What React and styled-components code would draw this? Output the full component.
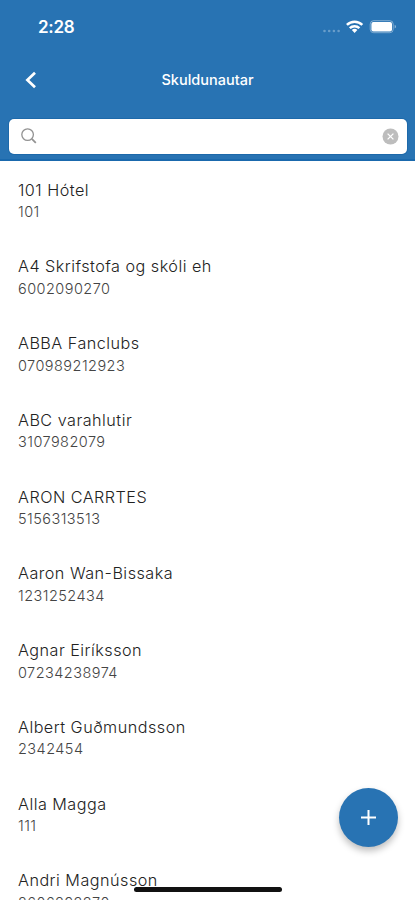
import React from "react";
import styled, { createGlobalStyle } from "styled-components";

const GlobalStyle = createGlobalStyle`
  * { box-sizing: border-box; }
  html, body { margin: 0; padding: 0; background: #fff; overflow: hidden; }
`;

const Screen = styled.main`
  position: relative;
  width: 415px;
  height: 900px;
  overflow: hidden;
  display: flex;
  flex-direction: column;
  background: #fff;
  font-family: Inter, "Liberation Sans", sans-serif;
`;

const Header = styled.header`
  flex: none;
  height: 161px;
  background: #2873b3;
  border-bottom: 2px solid #1a69ad;
  color: #fff;
`;

const StatusBar = styled.div`
  height: 54px;
  padding: 0 18px 0 38px;
  display: flex;
  align-items: center;
  justify-content: space-between;
`;

const Clock = styled.span`
  font-size: 17px;
  line-height: 20px;
  font-weight: 600;
  letter-spacing: -0.25px;
`;

const StatusIcons = styled.div`
  display: flex;
  align-items: center;
  svg { display: block; }
`;

const NavBar = styled.nav`
  height: 52px;
  display: grid;
  grid-template-columns: 60px 1fr 60px;
  align-items: center;
`;

const BackButton = styled.button`
  border: 0;
  padding: 0 0 0 24px;
  background: none;
  height: 20px;
  svg { display: block; }
`;

const Title = styled.h1`
  margin: 0;
  text-align: center;
  font-size: 14.5px;
  line-height: 20px;
  font-weight: 500;
`;

const SearchField = styled.div`
  margin: 12.5px 8px 0 9px;
  height: 35px;
  padding: 0 8px 0 12px;
  display: flex;
  align-items: center;
  justify-content: space-between;
  background: #fff;
  border-radius: 5px;
  box-shadow: 0 0 0 1px #1d69aa;
  svg { display: block; }
`;

const List = styled.ul`
  list-style: none;
  margin: 0;
  padding: 17.5px 18px 0;
`;

const Row = styled.li`
  height: 76.77px;
  white-space: nowrap;
`;

const Name = styled.div`
  font-size: 16.2px;
  line-height: 22px;
  font-weight: 300;
  letter-spacing: 0.48px;
  color: #222;
`;

const Number = styled.div`
  margin-top: 0.6px;
  font-size: 14.5px;
  line-height: 22px;
  font-weight: 300;
  letter-spacing: 0.45px;
  color: #444;
`;

const AddButton = styled.button`
  position: absolute;
  left: 339px;
  top: 788px;
  width: 59px;
  height: 59px;
  border: 0;
  padding: 0;
  border-radius: 50%;
  background: #2873b3;
  box-shadow: 0 4px 7px rgba(0, 0, 0, 0.26);
  display: grid;
  place-items: center;
`;

const HomeIndicator = styled.div`
  position: absolute;
  left: 134px;
  top: 887px;
  width: 148px;
  height: 5px;
  border-radius: 3px;
  background: #111;
`;

const customers = [
  ["101 Hótel", "101"],
  ["A4 Skrifstofa og skóli eh", "6002090270"],
  ["ABBA Fanclubs", "070989212923"],
  ["ABC varahlutir", "3107982079"],
  ["ARON CARRTES", "5156313513"],
  ["Aaron Wan-Bissaka", "1231252434"],
  ["Agnar Eiríksson", "07234238974"],
  ["Albert Guðmundsson", "2342454"],
  ["Alla Magga", "111"],
  ["Andri Magnússon", "2606893370"],
];

const StatusGlyphs = () => (
  <svg width="76" height="20" viewBox="321 17 76 20" fill="none">
    <g fill="#fff" opacity="0.3">
      <circle cx="324.5" cy="31" r="1.3" />
      <circle cx="329.2" cy="31" r="1.3" />
      <circle cx="333.9" cy="31" r="1.3" />
      <circle cx="338.6" cy="31" r="1.3" />
    </g>
    <g stroke="#fff" strokeWidth="2.5">
      <path d="M346.9 24.9a11 11 0 0 1 15.4 0" />
      <path d="M349.8 28.1a6.9 6.9 0 0 1 9.6 0" />
    </g>
    <path d="M351.8 30a4 4 0 0 1 5.6 0l-2.8 3z" fill="#fff" />
    <rect x="370.2" y="20.7" width="23" height="12" rx="3.4" stroke="#fff" strokeOpacity="0.4" />
    <rect x="371.4" y="21.9" width="20.6" height="9.6" rx="2" fill="#fff" />
    <path d="M394.7 24.8c1.7.6 1.7 3.2 0 3.8z" fill="#fff" fillOpacity="0.5" />
  </svg>
);

export default function App() {
  return (
    <>
      <GlobalStyle />
      <Screen>
        <Header>
          <StatusBar>
            <Clock>2:28</Clock>
            <StatusIcons><StatusGlyphs /></StatusIcons>
          </StatusBar>
          <NavBar>
            <BackButton aria-label="Back">
              <svg width="14" height="20" viewBox="0 0 14 20" fill="none" stroke="#fff" strokeWidth="2.7">
                <path d="M11 2.8 3.4 10l7.6 7.2" />
              </svg>
            </BackButton>
            <Title>Skuldunautar</Title>
          </NavBar>
          <SearchField>
            <svg width="16" height="16" viewBox="0 0 16 16" fill="none" stroke="#929292">
              <circle cx="6.6" cy="6.6" r="5.8" strokeWidth="1.3" />
              <path d="m10.8 10.8 4 4" strokeWidth="1.8" />
            </svg>
            <svg width="17" height="17" viewBox="0 0 17 17">
              <circle cx="8.5" cy="8.5" r="8" fill="#bdbdbd" />
              <path d="m5.6 5.6 5.8 5.8m0-5.8-5.8 5.8" stroke="#fff" strokeWidth="1.3" />
            </svg>
          </SearchField>
        </Header>
        <List>
          {customers.map(([name, number]) => (
            <Row key={name}>
              <Name>{name}</Name>
              <Number>{number}</Number>
            </Row>
          ))}
        </List>
        <AddButton aria-label="Add">
          <svg width="17" height="17" viewBox="0 0 17 17" stroke="#fff" strokeWidth="2">
            <path d="M8.5 1v15M1 8.5h15" />
          </svg>
        </AddButton>
        <HomeIndicator />
      </Screen>
    </>
  );
}
